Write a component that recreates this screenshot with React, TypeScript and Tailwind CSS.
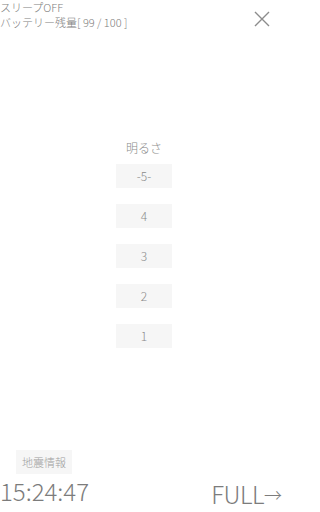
import React from "react";

const font = { fontFamily: '"Noto Sans CJK JP", "Noto Sans", sans-serif' };

function Btn({ label }: { label: string }) {
  return (
    <div className="w-[56px] h-[24px] bg-[#f6f6f6] flex items-center justify-center text-[12px] text-[#8a8a8a] font-light leading-none">
      {label}
    </div>
  );
}

export default function App() {
  return (
    <div
      className="relative w-[288px] h-[512px] bg-white overflow-hidden text-[#808080] font-light"
      style={font}
    >
      <div className="flex justify-between items-start">
        <div className="text-[11px] leading-[15px] pt-[0px] whitespace-nowrap">
          <div>スリープOFF</div>
          <div>バッテリー残量[ 99 / 100 ]</div>
        </div>
        <button className="mr-[18px] mt-[11px] w-[16px] h-[16px] flex items-center justify-center">
          <svg width="16" height="16" viewBox="0 0 16 16">
            <path d="M1 1 L15 15 M15 1 L1 15" stroke="#8c8c8c" strokeWidth="1.4" fill="none" />
          </svg>
        </button>
      </div>

      <div className="flex flex-col items-center mt-[111px]">
        <div className="text-[12px] leading-[14px] text-[#8a8a8a] mb-[9px]">明るさ</div>
        <div className="flex flex-col gap-[16px]">
          <Btn label="-5-" />
          <Btn label="4" />
          <Btn label="3" />
          <Btn label="2" />
          <Btn label="1" />
        </div>
      </div>

      <div className="absolute left-0 right-0 bottom-0 flex flex-col">
        <div className="ml-[16px] w-[56px] h-[24px] bg-[#f6f6f6] flex items-center justify-center text-[11px] text-[#a0a0a0]">
          地震情報
        </div>
        <div className="flex justify-between items-end mt-[1px]">
          <div className="text-[24px] leading-[32px] text-[#7c7c7c] pb-[5px]">15:24:47</div>
          <div className="text-[24px] leading-[32px] text-[#7c7c7c] pr-[6px] pb-[2px] flex items-center tracking-[-0.5px]">
            FULL<span className="text-[18px] tracking-normal">→</span>
          </div>
        </div>
      </div>
    </div>
  );
}
